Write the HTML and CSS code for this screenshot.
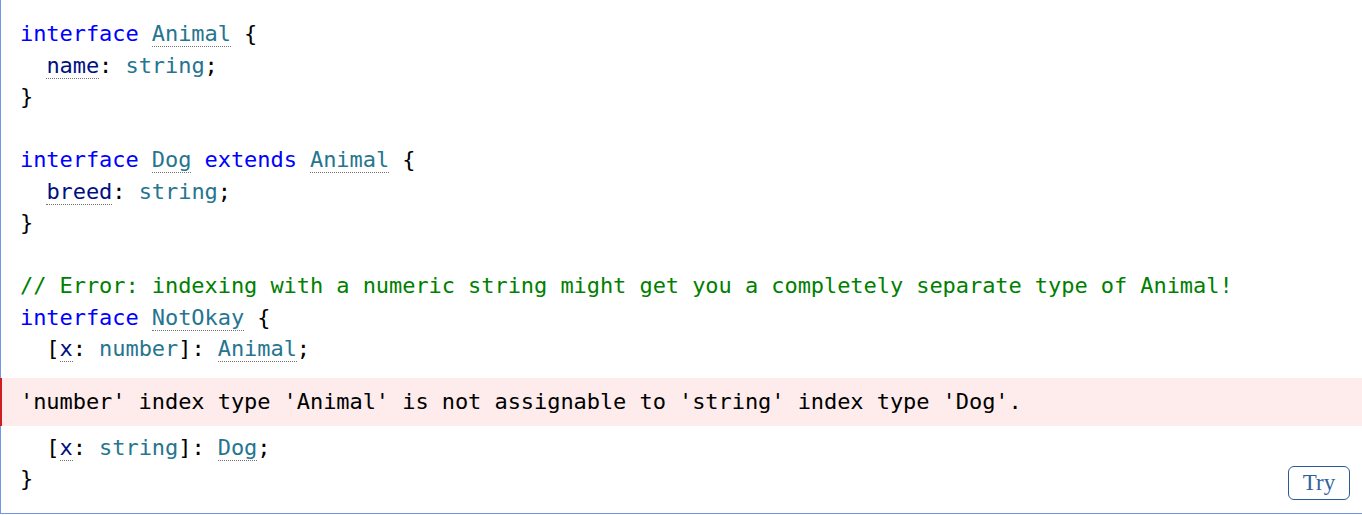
FILE: index.html
```html
<!DOCTYPE html>
<html>
<head>
<meta charset="utf-8">
<link rel="stylesheet" href="styles.css">
</head>
<body>
<div class="block">
<pre class="code"><div class="line"><span class="kw">interface</span> <span class="lsp ty">Animal</span> {</div><div class="line">  <span class="lsp prop">name</span>: <span class="ty">string</span>;</div><div class="line">}</div><div class="line"> </div><div class="line"><span class="kw">interface</span> <span class="lsp ty">Dog</span> <span class="kw">extends</span> <span class="lsp ty">Animal</span> {</div><div class="line">  <span class="lsp prop">breed</span>: <span class="ty">string</span>;</div><div class="line">}</div><div class="line"> </div><div class="line"><span class="cm">// Error: indexing with a numeric string might get you a completely separate type of Animal!</span></div><div class="line"><span class="kw">interface</span> <span class="lsp ty">NotOkay</span> {</div><div class="line">  [<span class="lsp prop">x</span>: <span class="ty">number</span>]: <span class="lsp ty">Animal</span>;</div><div class="error">'number' index type 'Animal' is not assignable to 'string' index type 'Dog'.</div><div class="line">  [<span class="lsp prop">x</span>: <span class="ty">string</span>]: <span class="lsp ty">Dog</span>;</div><div class="line">}</div></pre>
<button class="try">Try</button>
</div>
</body>
</html>
```
FILE: styles.css
```css
html, body {
  margin: 0;
  padding: 0;
  background: #ffffff;
}

.block {
  position: relative;
  border-left: 1px solid #7196e6;
  border-bottom: 1px solid #7196e6;
  height: 514px;
  box-sizing: border-box;
}

.code {
  margin: 0;
  padding: 18px 0 0 0;
  font-family: "DejaVu Sans Mono", monospace;
  font-size: 22px;
  letter-spacing: -0.065px;
  color: #000000;
}

.line {
  height: 31.5px;
  line-height: 31.5px;
  padding-left: 19px;
  white-space: pre;
}

.kw { color: #0000ff; }
.ty { color: #267590; }
.prop { color: #001080; }
.cm { color: #008000; }

.lsp {
  border-bottom: 1px dotted #747474;
}

.error {
  margin: 13px 0 6px -1px;
  height: 48px;
  line-height: 48px;
  padding-left: 18px;
  background: #fdeceb;
  border-left: 2px solid #cf1e1e;
  color: #000000;
  white-space: pre;
}

.try {
  position: absolute;
  left: 1287px;
  top: 466px;
  width: 62px;
  height: 34px;
  padding: 0;
  background: #ffffff;
  border: 1px solid #2c5a95;
  border-radius: 6px;
  font-family: "Liberation Serif", serif;
  font-size: 23px;
  color: #33619b;
}
```
